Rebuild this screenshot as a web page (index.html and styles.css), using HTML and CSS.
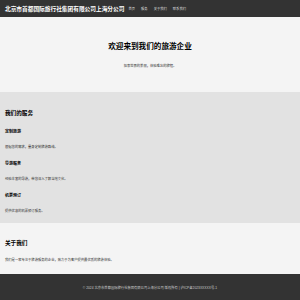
FILE: index.html
```html
<!DOCTYPE html>
<html lang="zh-CN">
<head>
    <meta charset="UTF-8">
    <meta name="viewport" content="width=device-width, initial-scale=1.0">
    <title>北京市首都国际旅行社集团有限公司上海分公司</title>
    <link rel="stylesheet" href="styles.css">
</head>
<body>
    <header class="site-header">
        <div class="logo">北京市首都国际旅行社集团有限公司上海分公司</div>
        <nav class="nav">
            <a href="#">首页</a>
            <a href="#services">服务</a>
            <a href="#about">关于我们</a>
            <a href="#contact">联系我们</a>
        </nav>
    </header>

    <section class="hero">
        <h1>欢迎来到我们的旅游企业</h1>
        <p>探索世界的美丽，体验难忘的旅程。</p>
    </section>

    <section class="services" id="services">
        <h2>我们的服务</h2>
        <div class="service">
            <h3>定制旅游</h3>
            <p>根据您的需求，量身定制旅游路线。</p>
        </div>
        <div class="service">
            <h3>导游服务</h3>
            <p>经验丰富的导游，带您深入了解当地文化。</p>
        </div>
        <div class="service">
            <h3>机票预订</h3>
            <p>提供优惠的机票预订服务。</p>
        </div>
    </section>

    <section class="about" id="about">
        <h2>关于我们</h2>
        <p>我们是一家专注于旅游服务的企业，致力于为客户提供最优质的旅游体验。</p>
    </section>

    <footer class="site-footer" id="contact">
        <p>© 2024 北京市首都国际旅行社集团有限公司上海分公司 版权所有 | 沪ICP备2023XXXXX号-1</p>
    </footer>
</body>
</html>
```

FILE: styles.css
```css
body {
    margin: 0;
    font-family: "Liberation Sans", "Noto Sans CJK SC", sans-serif;
    color: #222;
    background: #f4f4f4;
}
h1, h2, h3, p {
    margin: 0;
}
.site-header {
    background: #333;
    color: #fff;
    height: 17px;
    padding: 0 5px;
    display: flex;
    align-items: center;
    gap: 4px;
}
.logo {
    font-size: 5.7px;
    font-weight: bold;
    white-space: nowrap;
}
.nav {
    display: flex;
    gap: 6px;
}
.nav a {
    color: #ddd;
    text-decoration: none;
    font-size: 3.3px;
}
.hero {
    background: #f4f4f4;
    height: 75px;
    text-align: center;
    padding-top: 23px;
    box-sizing: border-box;
}
.hero h1 {
    font-size: 7.6px;
    font-weight: bold;
    color: #000;
    margin-bottom: 12px;
}
.hero p {
    font-size: 3.3px;
    color: #333;
}
.services {
    background: #e2e2e2;
    height: 131px;
    padding: 17px 5px 0;
    box-sizing: border-box;
}
.services h2, .about h2 {
    font-size: 5.6px;
    font-weight: bold;
    color: #000;
    margin-bottom: 10.5px;
}
.service h3 {
    font-size: 4px;
    font-weight: bold;
    color: #000;
    margin-bottom: 10.5px;
}
.service p, .about p {
    font-size: 3.3px;
    color: #333;
    margin-bottom: 10.5px;
}
.about {
    background: #f4f4f4;
    height: 51px;
    padding: 16px 5px 0;
    box-sizing: border-box;
}
.about h2 {
    margin-bottom: 10px;
}
.site-footer {
    background: #333;
    color: #ccc;
    height: 27px;
    display: flex;
    align-items: center;
    justify-content: center;
    font-size: 3.3px;
}
```
